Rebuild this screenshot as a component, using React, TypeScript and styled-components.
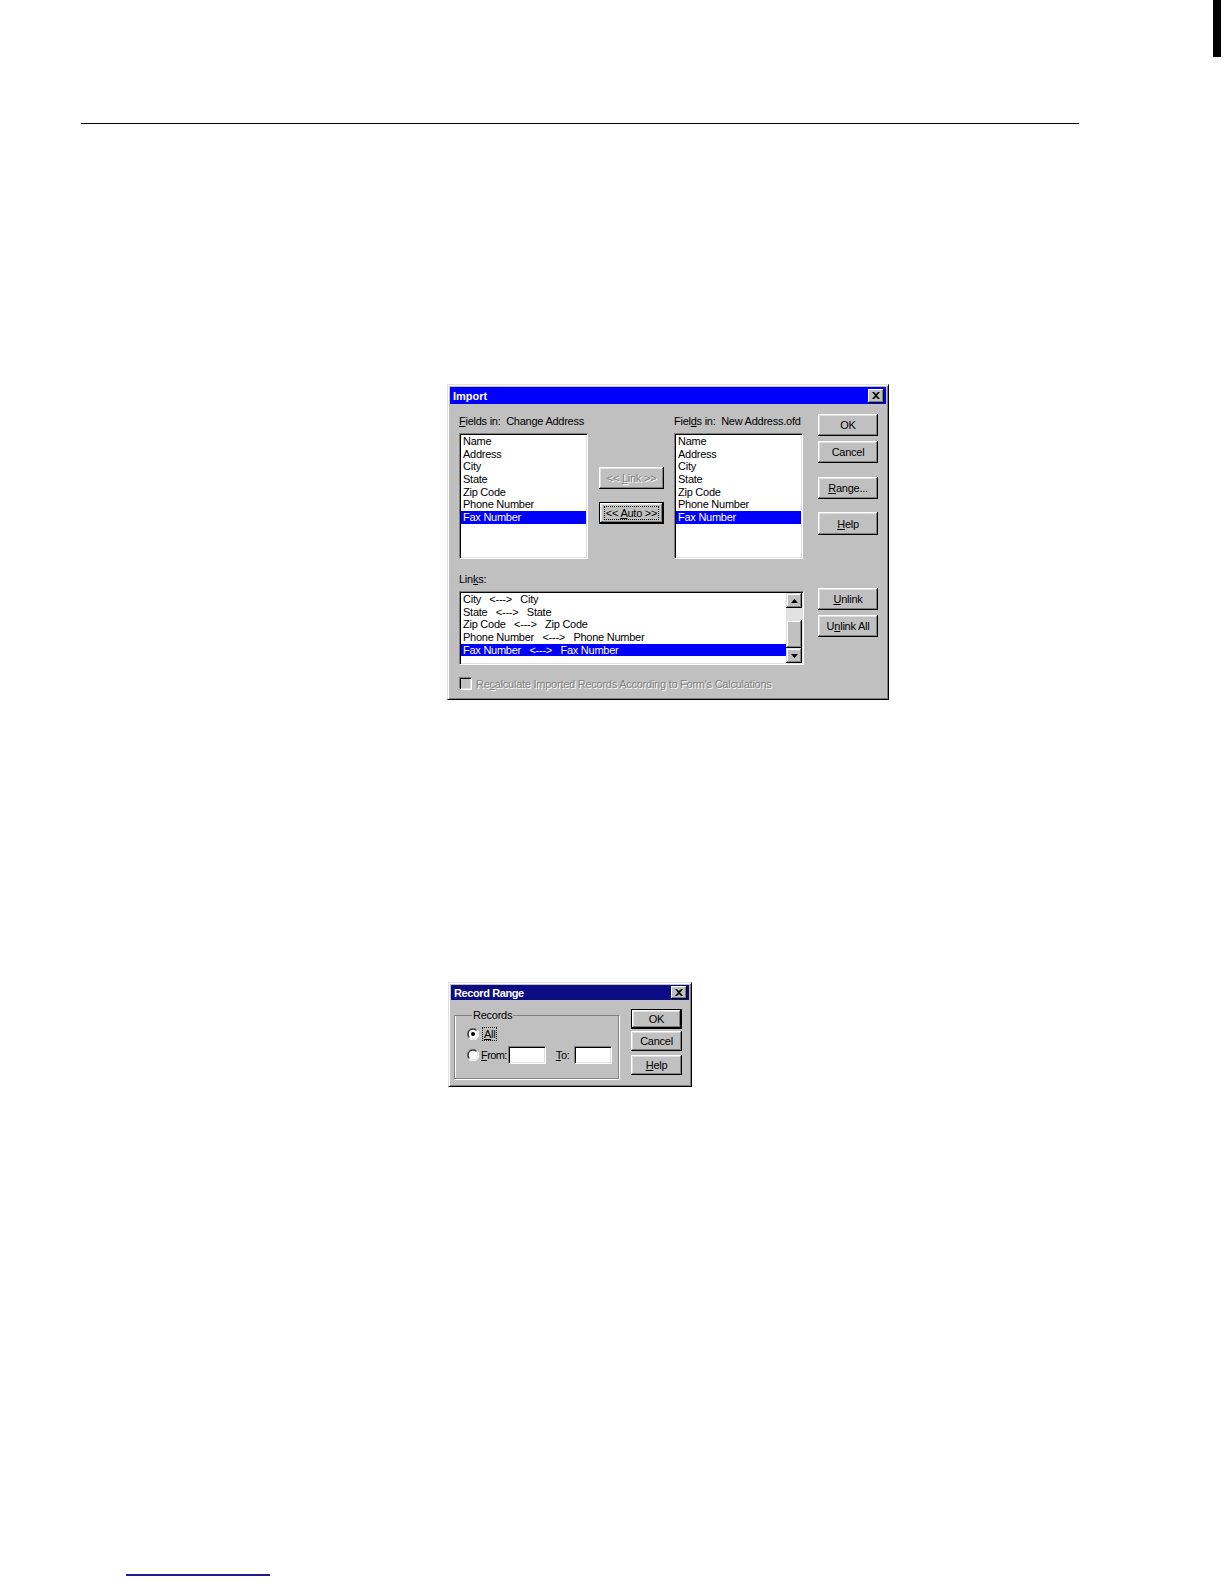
import React from "react";
import styled, { createGlobalStyle, css } from "styled-components";

const GlobalStyle = createGlobalStyle`
  html, body {
    margin: 0;
    padding: 0;
    background: #ffffff;
  }
  body {
    font-family: "Liberation Sans", Arial, sans-serif;
  }
`;

const Page = styled.div`
  width: 1224px;
  height: 1584px;
  display: flex;
  flex-direction: column;
  background: #ffffff;
  overflow: hidden;
`;

const Header = styled.div`
  height: 57px;
  display: flex;
  justify-content: flex-end;
  padding-right: 3px;
`;

const ThumbTab = styled.div`
  width: 8px;
  height: 57px;
  background: #000;
`;

const Rule = styled.div`
  margin: 66px 0 0 81px;
  width: 998px;
  height: 1px;
  background: #000;
`;

const FooterLink = styled.div`
  margin: 487px 0 0 126px;
  width: 144px;
  height: 2px;
  background: #1c1c8c;
`;

/* ---------- win95 parts ---------- */

const Dialog = styled.div<{ $w: number; $top: number; $left: number }>`
  width: ${(p) => p.$w}px;
  margin: ${(p) => p.$top}px 0 0 ${(p) => p.$left}px;
  box-sizing: border-box;
  background: #c0c0c0;
  border: 1px solid;
  border-color: #dfdfdf #000 #000 #dfdfdf;
  box-shadow: inset 1px 1px #fff, inset -1px -1px #808080;
  padding: 2px;
  font-size: 11px;
  letter-spacing: -0.25px;
  color: #000;
`;

const TitleBar = styled.div<{ $bg: string; $h: number; $ls?: number }>`
  height: ${(p) => p.$h}px;
  background: ${(p) => p.$bg};
  display: flex;
  align-items: center;
  justify-content: space-between;
  padding: 0 2px 0 3px;
  color: #fff;
  font-weight: bold;
  font-size: 11px;
  letter-spacing: ${(p) => p.$ls || 0}px;
`;

const CloseBox = styled.div<{ $h: number }>`
  width: 16px;
  height: ${(p) => p.$h}px;
  box-sizing: border-box;
  background: #c0c0c0;
  box-shadow: inset -1px -1px #000, inset 1px 1px #fff, inset -2px -2px #808080;
  display: flex;
  align-items: center;
  justify-content: center;
`;

const Button = styled.div<{ $w: number; $h: number; $mt?: number; $default?: boolean; $disabled?: boolean }>`
  width: ${(p) => p.$w}px;
  height: ${(p) => p.$h}px;
  margin-top: ${(p) => p.$mt || 0}px;
  box-sizing: border-box;
  background: #c0c0c0;
  display: flex;
  align-items: center;
  justify-content: center;
  font-size: 11px;
  white-space: pre;
  color: ${(p) => (p.$disabled ? "#808080" : "#000")};
  text-shadow: ${(p) => (p.$disabled ? "1px 1px 0 #fff" : "none")};
  box-shadow: inset -1px -1px #000, inset 1px 1px #fff, inset -2px -2px #808080, inset 2px 2px #dfdfdf;
  ${(p) =>
    p.$default &&
    css`
      border: 1px solid #000;
    `}
`;

const FocusRect = styled.span`
  border: 1px dotted #000;
  padding: 0 1px;
  line-height: 12px;
`;

const ListBox = styled.div<{ $w: number; $h: number }>`
  width: ${(p) => p.$w}px;
  height: ${(p) => p.$h}px;
  box-sizing: border-box;
  background: #fff;
  border: 1px solid;
  border-color: #808080 #fff #fff #808080;
  box-shadow: inset 1px 1px #000, inset -1px -1px #dfdfdf;
  padding: 1px;
  overflow: hidden;
  display: flex;
`;

const ListItems = styled.div`
  flex: 1;
  display: flex;
  flex-direction: column;
`;

const ListItem = styled.div<{ $selected?: boolean }>`
  height: 12.7px;
  line-height: 12.7px;
  padding-left: 2px;
  white-space: pre;
  background: ${(p) => (p.$selected ? "#0000ff" : "transparent")};
  color: ${(p) => (p.$selected ? "#fff" : "#000")};
`;

const ScrollBar = styled.div`
  width: 16px;
  display: flex;
  flex-direction: column;
`;

const ScrollArrow = styled.div`
  height: 15px;
  box-sizing: border-box;
  background: #c0c0c0;
  box-shadow: inset -1px -1px #000, inset 1px 1px #dfdfdf, inset -2px -2px #808080, inset 2px 2px #fff;
  display: flex;
  align-items: center;
  justify-content: center;
`;

const ScrollTrack = styled.div<{ $h: number }>`
  height: ${(p) => p.$h}px;
  background: #e2e2e2;
`;

const ScrollThumb = styled.div`
  flex: 1;
  background: #c0c0c0;
  box-shadow: inset -1px -1px #000, inset 1px 1px #dfdfdf, inset -2px -2px #808080, inset 2px 2px #fff;
`;

const Label = styled.div`
  line-height: 13px;
  height: 13px;
  margin-bottom: 5px;
  white-space: pre;
`;

/* ---------- import dialog layout ---------- */

const ImportBody = styled.div`
  padding: 11px 8px 7px 9px;
  display: flex;
  flex-direction: column;
`;

const TopSection = styled.div`
  display: flex;
  align-items: flex-start;
`;

const FieldCol = styled.div<{ $ml?: number; $w: number }>`
  width: ${(p) => p.$w}px;
  margin-left: ${(p) => p.$ml || 0}px;
  display: flex;
  flex-direction: column;
`;

const MiddleCol = styled.div`
  margin-left: 11px;
  width: 65px;
  padding-top: 52px;
  display: flex;
  flex-direction: column;
  gap: 13px;
`;

const ButtonCol = styled.div<{ $ml: number; $pt: number }>`
  margin-left: ${(p) => p.$ml}px;
  margin-top: ${(p) => p.$pt}px;
  display: flex;
  flex-direction: column;
`;

const LinksSection = styled.div`
  margin-top: 14px;
  display: flex;
  align-items: flex-start;
`;

const CheckRow = styled.div`
  margin-top: 12px;
  height: 13px;
  display: flex;
  align-items: center;
  gap: 4px;
  color: #808080;
  text-shadow: 1px 1px 0 #fff;
  white-space: pre;
`;

const CheckBox = styled.div`
  width: 13px;
  height: 13px;
  box-sizing: border-box;
  background: #c0c0c0;
  border: 1px solid;
  border-color: #808080 #fff #fff #808080;
  box-shadow: inset 1px 1px #000, inset -1px -1px #dfdfdf;
`;

/* ---------- record range layout ---------- */

const RangeBody = styled.div`
  padding: 9px 7px 5px 3px;
  display: flex;
  align-items: flex-start;
`;

const GroupBox = styled.fieldset`
  margin: 0;
  min-width: 0;
  width: 165px;
  height: 70px;
  box-sizing: border-box;
  border: 1px solid #808080;
  box-shadow: 1px 1px 0 #fff, inset 1px 0 0 #fff;
  padding: 4px 0 0 12px;
  display: flex;
  flex-direction: column;
  gap: 3px;

  legend {
    margin-left: 5px;
    padding: 0 1px;
    font-size: 11px;
    line-height: 12px;
  }
`;

const RadioRow = styled.div`
  display: flex;
  align-items: center;
  height: 18px;
  white-space: pre;
`;

const RadioText = styled.span<{ $ml?: number; $ls?: number }>`
  margin-left: ${(p) => p.$ml || 2}px;
  letter-spacing: ${(p) => (p.$ls === undefined ? -0.25 : p.$ls)}px;
`;

const TextInput = styled.div<{ $ml: number }>`
  width: 38px;
  height: 18px;
  margin-left: ${(p) => p.$ml}px;
  box-sizing: border-box;
  background: #fff;
  border: 1px solid;
  border-color: #808080 #fff #fff #808080;
  box-shadow: inset 1px 1px #000, inset -1px -1px #dfdfdf;
`;

const RangeButtons = styled.div`
  margin-left: 12px;
  display: flex;
  flex-direction: column;
`;

/* ---------- small drawings ---------- */

const CloseX = () => (
  <svg width="8" height="7" viewBox="0 0 8 7">
    <path d="M0 0h2l2 2 2-2h2L5 3.5 8 7H6L4 5 2 7H0l3-3.5z" fill="#000" />
  </svg>
);

const Arrow = ({ up }: { up?: boolean }) => (
  <svg width="7" height="4" viewBox="0 0 7 4">
    <path d={up ? "M3.5 0L7 4H0z" : "M0 0h7L3.5 4z"} fill="#000" />
  </svg>
);

const Radio = ({ checked }: { checked?: boolean }) => (
  <svg width="12" height="12" viewBox="0 0 12 12">
    <circle cx="6" cy="6" r="5.5" fill="#fff" />
    <path d="M10.2 1.8A5.5 5.5 0 0 0 1.8 10.2" stroke="#808080" fill="none" />
    <path d="M1.8 10.2A5.5 5.5 0 0 0 10.2 1.8" stroke="#fff" fill="none" />
    <path d="M9.5 2.5A4.5 4.5 0 0 0 2.5 9.5" stroke="#000" fill="none" />
    <path d="M2.5 9.5A4.5 4.5 0 0 0 9.5 2.5" stroke="#dfdfdf" fill="none" />
    {checked && <circle cx="6" cy="6" r="2" fill="#000" />}
  </svg>
);

const fields = ["Name", "Address", "City", "State", "Zip Code", "Phone Number", "Fax Number"];

const links = [
  ["City", "City"],
  ["State", "State"],
  ["Zip Code", "Zip Code"],
  ["Phone Number", "Phone Number"],
  ["Fax Number", "Fax Number"],
];

const FieldList = ({ selected }: { selected: string }) => (
  <ListBox $w={129} $h={126}>
    <ListItems>
      {fields.map((f) => (
        <ListItem key={f} $selected={f === selected}>
          {f}
        </ListItem>
      ))}
    </ListItems>
  </ListBox>
);

const ImportDialog = () => (
  <Dialog $w={442} $top={260} $left={447}>
    <TitleBar $bg="#0000ff" $h={17}>
      <span>Import</span>
      <CloseBox $h={14}>
        <CloseX />
      </CloseBox>
    </TitleBar>
    <ImportBody>
      <TopSection>
        <FieldCol $w={129}>
          <Label>
            <u>F</u>ields in:  Change Address
          </Label>
          <FieldList selected="Fax Number" />
        </FieldCol>
        <MiddleCol>
          <Button $w={65} $h={22} $disabled>
            {"<< "}
            <u>L</u>
            {"ink >>"}
          </Button>
          <Button $w={65} $h={22} $default>
            <FocusRect>
              {"<< "}
              <u>A</u>
              {"uto >>"}
            </FocusRect>
          </Button>
        </MiddleCol>
        <FieldCol $w={129} $ml={10}>
          <Label>
            Fiel<u>d</u>s in:  New Address.ofd
          </Label>
          <FieldList selected="Fax Number" />
        </FieldCol>
        <ButtonCol $ml={15} $pt={-1}>
          <Button $w={60} $h={22}>
            OK
          </Button>
          <Button $w={60} $h={22} $mt={5}>
            Cancel
          </Button>
          <Button $w={60} $h={22} $mt={14}>
            <span>
              <u>R</u>ange...
            </span>
          </Button>
          <Button $w={60} $h={23} $mt={13}>
            <span>
              <u>H</u>elp
            </span>
          </Button>
        </ButtonCol>
      </TopSection>

      <LinksSection>
        <FieldCol $w={345}>
          <Label>
            Lin<u>k</u>s:
          </Label>
          <ListBox $w={345} $h={74}>
            <ListItems>
              {links.map(([a, b], i) => (
                <ListItem key={a} $selected={i === links.length - 1}>
                  {`${a}   <--->   ${b}`}
                </ListItem>
              ))}
            </ListItems>
            <ScrollBar>
              <ScrollArrow>
                <Arrow up />
              </ScrollArrow>
              <ScrollTrack $h={12} />
              <ScrollThumb />
              <ScrollArrow>
                <Arrow />
              </ScrollArrow>
            </ScrollBar>
          </ListBox>
        </FieldCol>
        <ButtonCol $ml={14} $pt={15}>
          <Button $w={60} $h={22}>
            <span>
              <u>U</u>nlink
            </span>
          </Button>
          <Button $w={60} $h={22} $mt={5}>
            <span>
              U<u>n</u>link All
            </span>
          </Button>
        </ButtonCol>
      </LinksSection>

      <CheckRow>
        <CheckBox />
        <span>
          Re<u>c</u>alculate Imported Records According to Form's Calculations
        </span>
      </CheckRow>
    </ImportBody>
  </Dialog>
);

const RecordRangeDialog = () => (
  <Dialog $w={244} $top={282} $left={448}>
    <TitleBar $bg="#0c0c84" $h={15} $ls={-0.4}>
      <span>Record Range</span>
      <CloseBox $h={13}>
        <CloseX />
      </CloseBox>
    </TitleBar>
    <RangeBody>
      <GroupBox>
        <legend>Records</legend>
        <RadioRow>
          <Radio checked />
          <RadioText $ml={3}>
            <FocusRect>
              <u>A</u>ll
            </FocusRect>
          </RadioText>
        </RadioRow>
        <RadioRow>
          <Radio />
          <RadioText $ls={-0.6}>
            <u>F</u>rom:
          </RadioText>
          <TextInput $ml={1} />
          <RadioText $ml={10}>
            <u>T</u>o:
          </RadioText>
          <TextInput $ml={4} />
        </RadioRow>
      </GroupBox>
      <RangeButtons>
        <Button $w={51} $h={20} $default>
          OK
        </Button>
        <Button $w={51} $h={20} $mt={2}>
          Cancel
        </Button>
        <Button $w={51} $h={20} $mt={4}>
          <span>
            <u>H</u>elp
          </span>
        </Button>
      </RangeButtons>
    </RangeBody>
  </Dialog>
);

export default function App() {
  return (
    <Page>
      <GlobalStyle />
      <Header>
        <ThumbTab />
      </Header>
      <Rule />
      <ImportDialog />
      <RecordRangeDialog />
      <FooterLink />
    </Page>
  );
}
